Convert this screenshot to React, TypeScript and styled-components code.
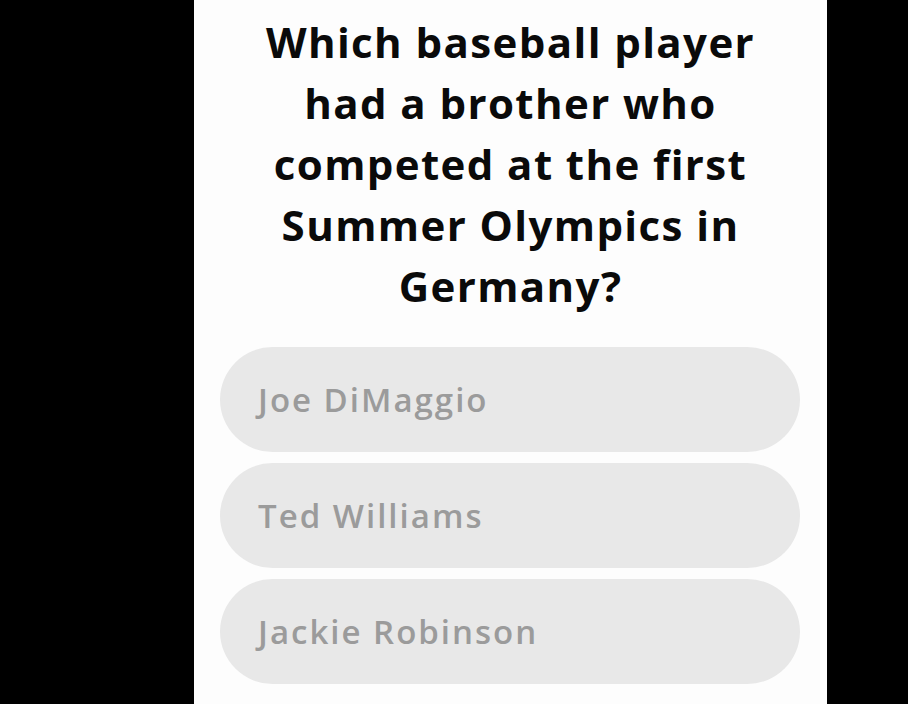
import React from "react";
import styled, { createGlobalStyle } from "styled-components";

const Global = createGlobalStyle`
  html, body { margin: 0; padding: 0; background: #000; }
  body { width: 908px; height: 704px; overflow: hidden; }
`;

const Stage = styled.div`
  width: 908px;
  height: 704px;
  background: #000;
  display: flex;
  justify-content: flex-start;
`;

const Panel = styled.main`
  margin-left: 194px;
  width: 633px;
  height: 704px;
  background: #fdfdfd;
  display: flex;
  flex-direction: column;
  align-items: stretch;
  font-family: "Open Sans", "Liberation Sans", sans-serif;
`;

const Question = styled.h1`
  margin: 0 auto;
  width: 512px;
  padding: 11px 0 0 0;
  font-size: 42px;
  line-height: 61px;
  font-weight: 700;
  letter-spacing: 1.4px;
  color: #0a0a0a;
  text-align: center;
`;

const Options = styled.div`
  margin-top: 31px;
  padding: 0 27px 0 26px;
  display: flex;
  flex-direction: column;
  gap: 11px;
`;

const Option = styled.button`
  height: 105px;
  border: none;
  border-radius: 53px;
  background: #e8e8e8;
  padding: 0 0 0 38px;
  display: flex;
  align-items: center;
  font-family: inherit;
  font-size: 33px;
  font-weight: 560;
  letter-spacing: 2px;
  color: #9b9b9b;
  text-align: left;
`;

const answers = ["Joe DiMaggio", "Ted Williams", "Jackie Robinson"];

export default function App() {
  return (
    <Stage>
      <Global />
      <Panel>
        <Question>
          Which baseball player had a brother who competed at the first Summer
          Olympics in Germany?
        </Question>
        <Options>
          {answers.map((a) => (
            <Option key={a}>{a}</Option>
          ))}
        </Options>
      </Panel>
    </Stage>
  );
}
